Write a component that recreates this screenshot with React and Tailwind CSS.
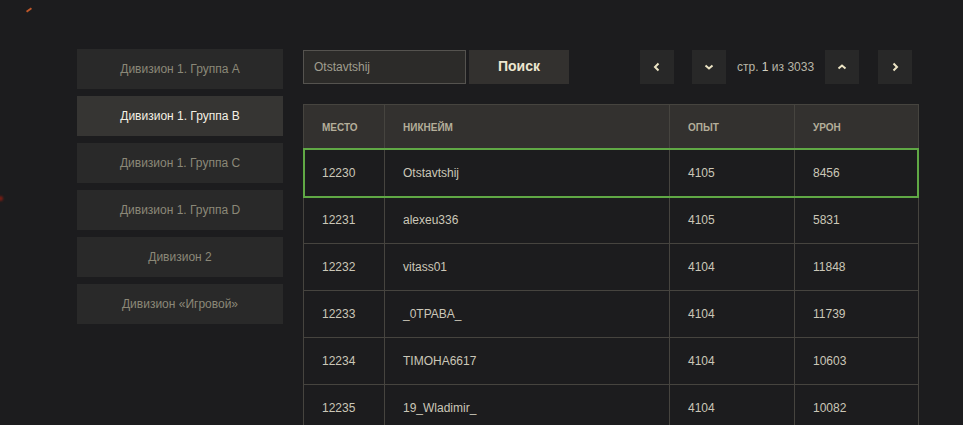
import { useState } from "react";

const divisions = [
  "Дивизион 1. Группа A",
  "Дивизион 1. Группа B",
  "Дивизион 1. Группа C",
  "Дивизион 1. Группа D",
  "Дивизион 2",
  "Дивизион «Игровой»",
];

const rows = [
  { place: 12230, nick: "Otstavtshij", exp: 4105, dmg: 8456 },
  { place: 12231, nick: "alexeu336", exp: 4105, dmg: 5831 },
  { place: 12232, nick: "vitass01", exp: 4104, dmg: 11848 },
  { place: 12233, nick: "_0TPABA_", exp: 4104, dmg: 11739 },
  { place: 12234, nick: "TIMOHA6617", exp: 4104, dmg: 10603 },
  { place: 12235, nick: "19_Wladimir_", exp: 4104, dmg: 10082 },
];

const cols = "grid grid-cols-[81px_285px_125px_124px]";

function PageButton({ children }) {
  return (
    <button className="w-[34px] h-[34px] bg-[#282828] flex items-center justify-center text-[#ece4c4]">
      {children}
    </button>
  );
}

function Chevron({ d }) {
  return (
    <svg width="10" height="10" viewBox="0 0 10 10" fill="none">
      <path d={d} stroke="currentColor" strokeWidth="2" />
    </svg>
  );
}

export default function App() {
  const [active, setActive] = useState(1);
  const [query, setQuery] = useState("Otstavtshij");

  return (
    <div className="relative w-[963px] h-[425px] overflow-hidden bg-[#1c1c1e] font-['Liberation_Sans',Arial,sans-serif]">
      {/* manchas decorativas */}
      <div className="absolute left-[26px] top-[9px] w-[6px] h-[2px] bg-[#c0582a] -rotate-[35deg]" />
      <div className="absolute -left-[2px] top-[196px] w-[5px] h-[5px] rounded-full bg-[#7a1d14] blur-[1px]" />

      <div className="flex gap-5 pl-[77px] pt-[49px]">
        {/* Sidebar */}
        <div className="w-[206px] flex flex-col gap-[7px]">
          {divisions.map((d, i) => (
            <button
              key={d}
              onClick={() => setActive(i)}
              className={
                "h-10 text-[12px] text-center " +
                (i === active
                  ? "bg-[#363533] text-[#f4f0e4]"
                  : "bg-[#292929] text-[#8b8878]")
              }
            >
              {d}
            </button>
          ))}
        </div>

        {/* Main */}
        <div className="w-[616px]">
          <div className="flex items-center h-[35px]">
            <input
              value={query}
              onChange={(e) => setQuery(e.target.value)}
              className="w-[163px] h-[34px] bg-[#2c2b29] border border-[#55534f] pl-[10px] text-[12px] text-[#a09e90] outline-none"
            />
            <button className="ml-[3px] w-[100px] h-[34px] bg-[#33312f] text-[14px] font-bold text-[#ece6d0]">
              Поиск
            </button>
            <div className="ml-[71px] flex items-center">
              <PageButton>
                <Chevron d="M6.5 1.5 L3 5 L6.5 8.5" />
              </PageButton>
              <div className="ml-[18px]">
                <PageButton>
                  <Chevron d="M1.5 3.5 L5 6.5 L8.5 3.5" />
                </PageButton>
              </div>
              <span className="mx-[11px] text-[12px] text-[#b8b6a8]">
                стр. <span className="text-[#d0cec0]">1</span> из 3033
              </span>
              <PageButton>
                <Chevron d="M1.5 6.5 L5 3.5 L8.5 6.5" />
              </PageButton>
              <div className="ml-[19px]">
                <PageButton>
                  <Chevron d="M3.5 1.5 L7 5 L3.5 8.5" />
                </PageButton>
              </div>
            </div>
          </div>

          {/* Tabla */}
          <div className="mt-5 w-[616px] border-t border-l border-r border-[#46443f]">
            <div className={cols + " h-[44px] bg-[#33312f] text-[10px] font-bold text-[#b4ae9a] uppercase"}>
              <div className="flex items-center pl-[18px] border-r border-[#46443f]">Место</div>
              <div className="flex items-center pl-[18px] border-r border-[#46443f]">Никнейм</div>
              <div className="flex items-center pl-[18px] border-r border-[#46443f]">Опыт</div>
              <div className="flex items-center pl-[18px]">Урон</div>
            </div>
            {rows.map((r, i) => (
              <div
                key={r.place}
                className={
                  cols +
                  " text-[12px] text-[#cbc7b8] border-b border-[#46443f] " +
                  (i === 0 ? "h-[48px] outline-2 outline-[#60a845] -outline-offset-1" : "h-[47px]")
                }
              >
                <div className="flex items-center pl-[18px] border-r border-[#46443f]">{r.place}</div>
                <div className="flex items-center pl-[18px] border-r border-[#46443f]">{r.nick}</div>
                <div className="flex items-center pl-[18px] border-r border-[#46443f]">{r.exp}</div>
                <div className="flex items-center pl-[18px]">{r.dmg}</div>
              </div>
            ))}
          </div>
        </div>
      </div>
    </div>
  );
}
